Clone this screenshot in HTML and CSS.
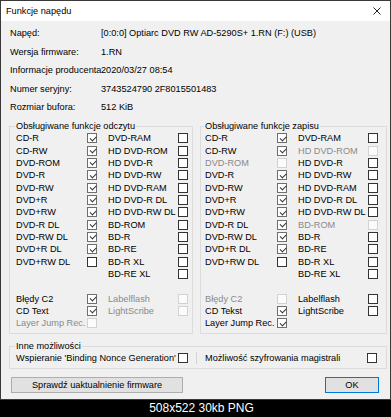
FILE: index.html
```html
<!DOCTYPE html>
<html lang="pl">

<head>
  <meta charset="UTF-8" />
  <title>Funkcje napędu</title>
  <link rel="stylesheet" href="styles.css">
</head>

<body>
  <div class="window">
    <div class="titlebar">
      <span class="title">Funkcje napędu</span>
      <svg class="close" width="8" height="8" viewBox="0 0 8 8">
        <path d="M0.5 0.5 L7.5 7.5 M7.5 0.5 L0.5 7.5" stroke="#111" stroke-width="0.9" fill="none" />
      </svg>
    </div>

    <div class="main">
      <div class="info">
        <span>Napęd:</span><span>[0:0:0] Optiarc DVD RW AD-5290S+ 1.RN (F:) (USB)</span>
        <span>Wersja firmware:</span><span>1.RN</span>
        <span>Informacje producenta</span><span>2020/03/27 08:54</span>
        <span>Numer seryjny:</span><span>3743524790 2F8015501483</span>
        <span>Rozmiar bufora:</span><span>512 KiB</span>
      </div>

      <div class="boxes">
        <fieldset class="group read">
          <legend>Obsługiwane funkcje odczytu</legend>
          <div class="row"><span>CD-R</span><span class="cb on"></span><span>DVD-RAM</span><span class="cb"></span></div>
          <div class="row"><span>CD-RW</span><span class="cb on"></span><span>HD DVD-ROM</span><span class="cb"></span></div>
          <div class="row"><span>DVD-ROM</span><span class="cb on"></span><span>HD DVD-R</span><span class="cb"></span></div>
          <div class="row"><span>DVD-R</span><span class="cb on"></span><span>HD DVD-RW</span><span class="cb"></span></div>
          <div class="row"><span>DVD-RW</span><span class="cb on"></span><span>HD DVD-RAM</span><span class="cb"></span></div>
          <div class="row"><span>DVD+R</span><span class="cb on"></span><span>HD DVD-R DL</span><span class="cb"></span></div>
          <div class="row"><span>DVD+RW</span><span class="cb on"></span><span>HD DVD-RW DL</span><span class="cb"></span></div>
          <div class="row"><span>DVD-R DL</span><span class="cb on"></span><span>BD-ROM</span><span class="cb"></span></div>
          <div class="row"><span>DVD-RW DL</span><span class="cb on"></span><span>BD-R</span><span class="cb"></span></div>
          <div class="row"><span>DVD+R DL</span><span class="cb on"></span><span>BD-RE</span><span class="cb"></span></div>
          <div class="row"><span>DVD+RW DL</span><span class="cb"></span><span>BD-R XL</span><span class="cb"></span></div>
          <div class="row"><span></span><span></span><span>BD-RE XL</span><span class="cb"></span></div>
          <div class="row"></div>
          <div class="row"><span>Błędy C2</span><span class="cb on"></span><span class="dim">Labelflash</span><span class="cb dis"></span></div>
          <div class="row"><span>CD Text</span><span class="cb on"></span><span class="dim">LightScribe</span><span class="cb dis"></span></div>
          <div class="row"><span class="dim">Layer Jump Rec.</span><span class="cb dis"></span></div>
        </fieldset>

        <fieldset class="group write">
          <legend>Obsługiwane funkcje zapisu</legend>
          <div class="row"><span>CD-R</span><span class="cb on"></span><span>DVD-RAM</span><span class="cb"></span></div>
          <div class="row"><span>CD-RW</span><span class="cb on"></span><span class="dim">HD DVD-ROM</span><span class="cb dis"></span></div>
          <div class="row"><span class="dim">DVD-ROM</span><span class="cb dis"></span><span>HD DVD-R</span><span class="cb"></span></div>
          <div class="row"><span>DVD-R</span><span class="cb on"></span><span>HD DVD-RW</span><span class="cb"></span></div>
          <div class="row"><span>DVD-RW</span><span class="cb on"></span><span>HD DVD-RAM</span><span class="cb"></span></div>
          <div class="row"><span>DVD+R</span><span class="cb on"></span><span>HD DVD-R DL</span><span class="cb"></span></div>
          <div class="row"><span>DVD+RW</span><span class="cb on"></span><span>HD DVD-RW DL</span><span class="cb"></span></div>
          <div class="row"><span>DVD-R DL</span><span class="cb on"></span><span class="dim">BD-ROM</span><span class="cb dis"></span></div>
          <div class="row"><span>DVD-RW DL</span><span class="cb on"></span><span>BD-R</span><span class="cb"></span></div>
          <div class="row"><span>DVD+R DL</span><span class="cb on"></span><span>BD-RE</span><span class="cb"></span></div>
          <div class="row"><span>DVD+RW DL</span><span class="cb"></span><span>BD-R XL</span><span class="cb"></span></div>
          <div class="row"><span></span><span></span><span>BD-RE XL</span><span class="cb"></span></div>
          <div class="row"></div>
          <div class="row"><span class="dim">Błędy C2</span><span class="cb dis"></span><span>Labelflash</span><span class="cb"></span></div>
          <div class="row"><span>CD Tekst</span><span class="cb on"></span><span>LightScribe</span><span class="cb"></span></div>
          <div class="row"><span>Layer Jump Rec.</span><span class="cb on"></span></div>
        </fieldset>
      </div>

      <fieldset class="group other">
        <legend>Inne możliwości</legend>
        <div class="options">
          <div class="opt first"><span>Wspieranie 'Binding Nonce Generation'</span><span class="cb"></span></div>
          <div class="divider"></div>
          <div class="opt second"><span>Możliwość szyfrowania magistrali</span><span class="cb"></span></div>
        </div>
      </fieldset>

      <div class="buttons">
        <button class="btn update">Sprawdź uaktualnienie firmware</button>
        <button class="btn ok">OK</button>
      </div>
    </div>
  </div>
  <div class="caption">508x522 30kb PNG</div>
</body>

</html>
```

FILE: styles.css
```css
* {
  box-sizing: border-box;
}

body {
  margin: 0;
  width: 391px;
  height: 417px;
  background-color: #000;
  font-family: "Liberation Sans", Arial, sans-serif;
  font-size: 9.2px;
  color: #000;
  overflow: hidden;
}

.window {
  width: 391px;
  height: 400px;
  border: 1px solid #3a3a3a;
  background-color: #f0f0f0;
}

.titlebar {
  height: 20px;
  background-color: #fff;
  display: flex;
  align-items: center;
  justify-content: space-between;
  padding: 0 9px 0 5px;
}

.close {
  display: block;
  margin-top: -1px;
}

.main {
  padding: 3px 3px 0 8px;
}

.info {
  display: grid;
  grid-template-columns: 91px auto;
  grid-auto-rows: 18.5px;
  align-items: center;
  padding-left: 1px;
  white-space: nowrap;
}

.boxes {
  display: flex;
  gap: 7px;
  margin-top: 3.75px;
}

.group {
  margin: 0;
  border: 1px solid #dcdcdc;
  min-width: 0;
}

.group legend {
  padding: 0 1px;
  margin-left: -1px;
  line-height: 12px;
  height: 12px;
}

.read {
  width: 184px;
  padding: 0 3px 3.5px 6px;
}

.write {
  width: 187px;
  padding: 0 7px 3.5px 4px;
}

.row {
  display: grid;
  grid-template-columns: 71px 10px 81px 10px;
  height: 12.33px;
  align-items: center;
  white-space: nowrap;
}

.write .row {
  grid-template-columns: 72px 10px 81px 10px;
}

.row > :nth-child(3) {
  padding-left: 11px;
}

.dim {
  color: #8a8a8a;
}

.cb {
  position: relative;
  display: block;
  width: 10px;
  height: 10px;
  border: 1px solid #333;
  background-color: #fff;
}

.cb.on {
  border-color: #6e6e6e;
}

.cb.on::after {
  content: '';
  position: absolute;
  left: 1.5px;
  top: 1.2px;
  width: 5px;
  height: 2.6px;
  border-left: 1px solid #333;
  border-bottom: 1px solid #333;
  transform: rotate(-45deg);
}

.cb.dis {
  border-color: #d2d2d2;
  background-color: #fbfbfb;
}

.other {
  width: 378px;
  margin-top: 6px;
  padding: 0 7px 3px 6px;
}

.options {
  display: flex;
  align-items: center;
  height: 12.5px;
}

.opt {
  display: flex;
  align-items: center;
  justify-content: space-between;
  width: 172px;
  white-space: nowrap;
}

.divider {
  width: 1px;
  height: 12px;
  background-color: #d4d4d4;
  margin: 0 8px 0 8px;
}

.buttons {
  display: flex;
  justify-content: space-between;
  margin-top: 8px;
  padding: 0 8px 0 2px;
}

.btn {
  height: 16px;
  padding: 0;
  font-family: inherit;
  font-size: 9.2px;
  color: #000;
  background-color: #e1e1e1;
  border: 1px solid #adadad;
  border-radius: 0;
}

.update {
  width: 172px;
}

.ok {
  width: 54px;
  border: 1.5px solid #0078d7;
}

.caption {
  height: 17px;
  line-height: 17px;
  color: #fff;
  font-size: 12px;
  text-align: center;
  padding-left: 12px;
}
```
